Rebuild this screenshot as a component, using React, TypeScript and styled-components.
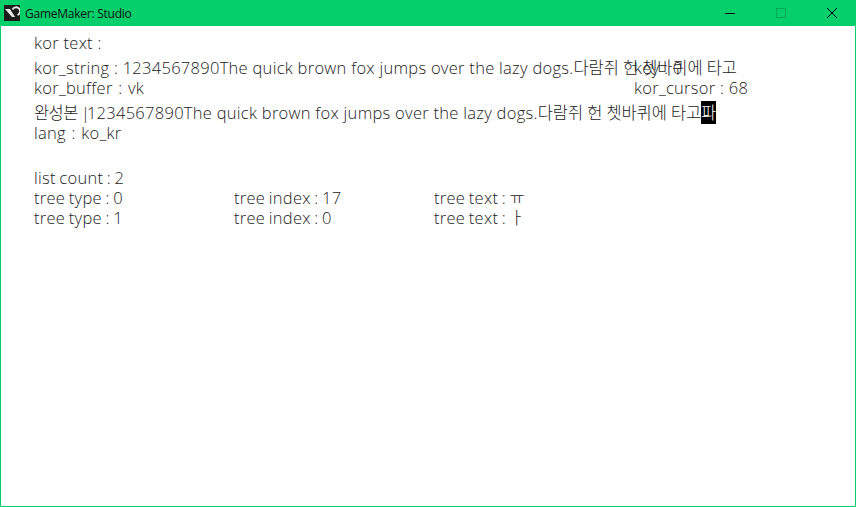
import { createGlobalStyle } from 'styled-components';
import styled from 'styled-components';

const GlobalStyle = createGlobalStyle`
  html, body {
    margin: 0;
    height: 100%;
    background: #fff;
  }
  #root {
    height: 100%;
  }
`;

const Window = styled.div`
  width: 856px;
  height: 507px;
  box-sizing: border-box;
  border: 1px solid #04cf6b;
  border-top: 0;
  display: flex;
  flex-direction: column;
  overflow: hidden;
  background: #fff;
`;

const TitleBar = styled.div`
  height: 26px;
  flex: none;
  margin: 0 -1px;
  padding: 0 1px 0 4px;
  background: #04cf6b;
  display: flex;
  align-items: center;
  gap: 5px;
  font: 12px "Open Sans", "Noto Sans", sans-serif;
  letter-spacing: -0.25px;
  color: #111;
`;

const Title = styled.span`
  flex: 1;
`;

const WindowButton = styled.div`
  width: 46px;
  height: 26px;
  display: flex;
  align-items: center;
  justify-content: center;
`;

const Content = styled.div`
  padding: 7px 0 0 33px;
  font: 300 16.5px/20px "Open Sans", "Noto Sans CJK KR", sans-serif;
  letter-spacing: 0.28px;
  color: #222;
`;

const Row = styled.div<{ $gap?: number; $wordSpacing?: number }>`
  display: grid;
  grid-template-columns: repeat(4, 200px);
  height: 20px;
  margin-top: ${p => p.$gap ?? 0}px;
  word-spacing: ${p => p.$wordSpacing ?? 0}px;
  white-space: nowrap;
`;

const PlainWords = styled.span`
  word-spacing: 0;
`;

const Hangul = styled.span`
  letter-spacing: -0.1px;
`;

const Prefix = styled.span`
  letter-spacing: -0.6px;
  word-spacing: -0.5px;
`;

const Bar = styled.span`
  letter-spacing: -3px;
`;

const Cursor = styled.span`
  background: #000;
  color: #fff;
  letter-spacing: 0;
`;

const LATIN = '1234567890The quick brown fox jumps over the lazy dogs.';
const KOR = '다람쥐 헌 쳇바퀴에 타고';

function AppIcon() {
  return (
    <svg width="16" height="16" viewBox="0 0 16 16">
      <rect width="16" height="16" fill="#1c1c1c" />
      <path d="M1 4h5l5 8H8z" fill="#e8e8e8" />
      <path d="M8.5 4.5a4 4 0 1 1 5 5.5" fill="none" stroke="#e8e8e8" strokeWidth="1.8" />
    </svg>
  );
}

export default function App() {
  return (
    <>
      <GlobalStyle />
      <Window>
        <TitleBar>
          <AppIcon />
          <Title>GameMaker: Studio</Title>
          <WindowButton>
            <svg width="10" height="10" viewBox="0 0 10 10">
              <path d="M0 5.5h10" stroke="#000" />
            </svg>
          </WindowButton>
          <WindowButton>
            <svg width="10" height="10" viewBox="0 0 10 10">
              <rect x="0.5" y="0.5" width="9" height="9" fill="none" stroke="#02a956" />
            </svg>
          </WindowButton>
          <WindowButton>
            <svg width="10" height="10" viewBox="0 0 10 10">
              <path d="M0 0l10 10M10 0L0 10" stroke="#000" />
            </svg>
          </WindowButton>
        </TitleBar>
        <Content>
          <Row>kor text :</Row>
          <Row $gap={5}>
            <span>kor_string : {LATIN}<Hangul>{KOR}</Hangul></span>
            <span />
            <span />
            <span>key : 0</span>
          </Row>
          <Row $wordSpacing={1}>
            <span>kor_buffer : vk</span>
            <span />
            <span />
            <PlainWords>kor_cursor : 68</PlainWords>
          </Row>
          <Row $gap={5}>
            <span><Prefix>완성본 <Bar>|</Bar></Prefix>{LATIN}<Hangul>{KOR}</Hangul><Cursor>파</Cursor></span>
          </Row>
          <Row $wordSpacing={1}>lang : ko_kr</Row>
          <Row $gap={25} $wordSpacing={-1}>list count : 2</Row>
          <Row $wordSpacing={-1}>
            <span>tree type : 0</span>
            <span>tree index : 17</span>
            <span>tree text : ㅠ</span>
          </Row>
          <Row $wordSpacing={-1}>
            <span>tree type : 1</span>
            <span>tree index : 0</span>
            <span>tree text : ㅏ</span>
          </Row>
        </Content>
      </Window>
    </>
  );
}
